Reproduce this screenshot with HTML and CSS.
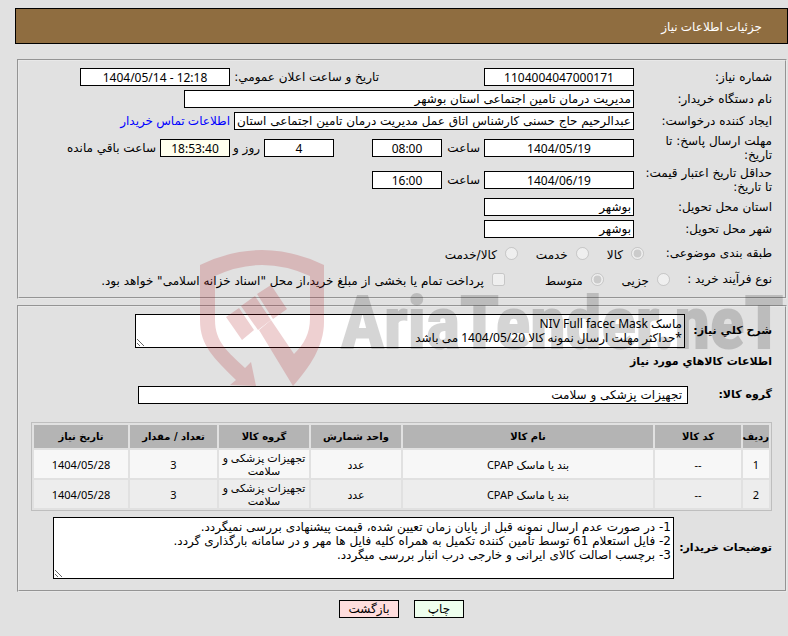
FILE: index.html
```html
<!DOCTYPE html>
<html lang="fa" dir="rtl">

<head>
    <meta charset="utf-8">
    <title>جزئیات اطلاعات نیاز</title>
    <link rel="stylesheet" href="styles.css">
</head>

<body>
    <h1 class="title">جزئیات اطلاعات نیاز</h1>

    <div id="page">
        <fieldset class="box info">
            <div class="row">
                <label class="name" for="number">شماره نیاز:</label>
                <input class="w150 center" type="text" id="number" value="1104004047000171" readonly>
                <label class="name second" for="announce">تاریخ و ساعت اعلان عمومي:</label>
                <input class="w150 center" type="text" id="announce" dir="ltr" value="1404/05/14 - 12:18" readonly>
            </div>
            <div class="row">
                <label class="name" for="buyer">نام دستگاه خریدار:</label>
                <input class="w450" type="text" id="buyer" value="مدیریت درمان تامین اجتماعی استان بوشهر" readonly>
            </div>
            <div class="row">
                <label class="name" for="creator">ایجاد کننده درخواست:</label>
                <input class="w400" type="text" id="creator" value="عبدالرحیم حاج حسنی کارشناس اتاق عمل مدیریت درمان تامین اجتماعی استان بوشهر" readonly>
                <a class="contact" href="#">اطلاعات تماس خریدار</a>
            </div>
            <div class="row tall">
                <label class="name" for="reply-date">مهلت ارسال پاسخ: تا<br>تاریخ:</label>
                <input class="w150 center" type="text" id="reply-date" value="1404/05/19" readonly>
                <label class="hour" for="reply-hour">ساعت</label>
                <input class="w70 center" type="text" id="reply-hour" value="08:00" readonly>
                <input class="w70 center days" type="text" id="days" value="4" readonly>
                <label class="and" for="days">روز و</label>
                <input class="w70 center timer" type="text" id="timer" value="18:53:40" readonly>
                <label class="left" for="timer">ساعت باقي مانده</label>
            </div>
            <div class="row tall">
                <label class="name" for="price-date">حداقل تاریخ اعتبار قیمت:<br>تا تاریخ:</label>
                <input class="w150 center" type="text" id="price-date" value="1404/06/19" readonly>
                <label class="hour" for="price-hour">ساعت</label>
                <input class="w70 center" type="text" id="price-hour" value="16:00" readonly>
            </div>
            <div class="row">
                <label class="name" for="province">استان محل تحویل:</label>
                <input class="w150" type="text" id="province" value="بوشهر" readonly>
            </div>
            <div class="row">
                <label class="name" for="city">شهر محل تحویل:</label>
                <input class="w150" type="text" id="city" value="بوشهر" readonly>
            </div>
            <div class="row options">
                <span class="caption">طبقه بندی موضوعی:</span>
                <input type="radio" name="kind" id="goods" checked disabled>
                <label for="goods">کالا</label>
                <input type="radio" name="kind" id="service" disabled>
                <label for="service">خدمت</label>
                <input type="radio" name="kind" id="both" disabled>
                <label for="both">کالا/خدمت</label>
            </div>
            <div class="row options">
                <span class="caption short">نوع فرآیند خرید :</span>
                <input type="radio" name="process" id="small" disabled>
                <label for="small">جزیی</label>
                <input type="radio" name="process" id="medium" checked disabled>
                <label class="wide" for="medium">متوسط</label>
                <input type="checkbox" id="treasury" disabled>
                <label for="treasury">پرداخت تمام یا بخشی از مبلغ خرید،از محل "اسناد خزانه اسلامی" خواهد بود.</label>
            </div>
        </fieldset>

        <fieldset class="box goods">
            <div class="line">
                <label class="bold summary-name" for="summary">شرح کلي نیاز:</label>
                <textarea class="summary" id="summary" readonly>ماسک NIV Full facec Mask
*حداکثر مهلت ارسال نمونه کالا 1404/05/20 می باشد</textarea>
            </div>
            <h2 class="bold">اطلاعات کالاهاي مورد نیاز</h2>
            <div class="line">
                <label class="bold group-name" for="group">گروه کالا:</label>
                <input class="group" type="text" id="group" value="تجهیزات پزشکی و سلامت" readonly>
            </div>
            <table>
                <colgroup>
                    <col class="c-row">
                    <col class="c-code">
                    <col class="c-name">
                    <col class="c-unit">
                    <col class="c-group">
                    <col class="c-count">
                    <col class="c-date">
                </colgroup>
                <thead>
                    <tr>
                        <th>ردیف</th>
                        <th>کد کالا</th>
                        <th>نام کالا</th>
                        <th>واحد شمارش</th>
                        <th>گروه کالا</th>
                        <th>تعداد / مقدار</th>
                        <th>تاریخ نیاز</th>
                    </tr>
                </thead>
                <tbody>
                    <tr>
                        <td>1</td>
                        <td>--</td>
                        <td>بند یا ماسک CPAP</td>
                        <td>عدد</td>
                        <td>تجهیزات پزشکی و سلامت</td>
                        <td>3</td>
                        <td>1404/05/28</td>
                    </tr>
                    <tr>
                        <td>2</td>
                        <td>--</td>
                        <td>بند یا ماسک CPAP</td>
                        <td>عدد</td>
                        <td>تجهیزات پزشکی و سلامت</td>
                        <td>3</td>
                        <td>1404/05/28</td>
                    </tr>
                </tbody>
            </table>
            <div class="line">
                <label class="bold notes-name" for="notes">توضیحات خریدار:</label>
                <textarea class="notes" id="notes" readonly>1- در صورت عدم ارسال نمونه قبل از پایان زمان تعیین شده، قیمت پیشنهادی بررسی نمیگردد.
2- فایل استعلام 61 توسط تأمین کننده تکمیل به همراه کلیه فایل ها مهر و در سامانه بارگذاری گردد.
3- برچسب اصالت کالای ایرانی و خارجی درب انبار بررسی میگردد.</textarea>
            </div>
        </fieldset>

        <div class="buttons">
            <button type="button" class="print">چاپ</button>
            <button type="button" class="back">بازگشت</button>
        </div>

        <div class="watermark" dir="ltr" aria-hidden="true">
            <svg class="shield" width="126" height="138" viewBox="0 0 126 138">
                <path d="M0 15Q62 -15 124 15V72C124 96 110 117 93 136L59 80L71 70L94 104C104 94 110 84 110 68V26Q62 4 15 26V70C15 92 28 102 45 118L51 112L56 136L30 135L36 130C14 108 0 96 0 70Z" />
                <path d="M26 67L39 58L54 80L42 90ZM41 56L55 46L71 70L58 80ZM57 44L71 35L87 59L73 69Z" />
            </svg>
            <span class="brand">AriaTender.neT</span>
        </div>
    </div>
</body>

</html>
```

FILE: styles.css
```css
body {
    margin: 8px 0 0 15px;
    background-color: #e1e1e1;
    color: #000;
    font-family: "DejaVu Sans", sans-serif;
    font-size: 12px;
    line-height: 14px;
}
.title {
    margin: 0 0 15px;
    padding: 11px 25px 9px;
    border: 1px solid #000;
    background-color: #8f6d40;
    color: #fff;
    font-family: "Noto Sans", "DejaVu Sans", sans-serif;
    font-size: 12px;
    font-weight: normal;
    line-height: 14px;
}
#page {
    position: relative;
}
.box {
    min-width: 0;
    margin: 0 1px 6px 2px;
    border: 2px groove #e8e8e8;
}
.info {
    padding: 5px 13px 5px 12px;
}
.row {
    display: flex;
    align-items: center;
    height: 22px;
    white-space: nowrap;
}
.tall {
    height: 32px;
}
.name {
    width: 138px;
}
.second {
    width: 145px;
    margin-right: 105px;
    margin-left: 4px;
}
input,
textarea,
button {
    box-sizing: border-box;
    font-family: inherit;
    font-size: 12px;
}
input[type="text"] {
    height: 18px;
    padding: 1px 2px;
    border: 1px solid #000;
    background-color: #fff;
    flex-shrink: 0;
}
.w70 {
    width: 70px;
}
.w150 {
    width: 150px;
}
.w400 {
    width: 400px;
}
.w450 {
    width: 450px;
}
.center {
    font-family: "Noto Sans", "DejaVu Sans", sans-serif;
    text-align: center;
}
.contact {
    margin-right: 4px;
    color: #0000ff;
    font-family: "Noto Sans", "DejaVu Sans", sans-serif;
    text-decoration: none;
}
.hour {
    width: 38px;
    margin-right: 4px;
}
.days {
    margin-right: 38px;
}
.and {
    width: 30px;
    margin-right: 4px;
}
.left {
    margin-right: 4px;
}
.row .timer {
    background-color: #ffffee;
}
.options {
    height: 26px;
}
.options input {
    margin: 0 0 0 8px;
}
.options label {
    padding-top: 3px;
    margin-left: 18px;
}
.options .wide {
    margin-left: 40px;
}
.caption {
    width: 128px;
}
.short {
    width: 102px;
}
.goods {
    padding: 7px 13px 11px 12px;
}
.line {
    display: flex;
    align-items: center;
    gap: 4px;
}
.bold {
    margin: 0;
    font-size: 11px;
    font-weight: bold;
    white-space: nowrap;
}
h2.bold {
    padding: 7px 0 17px;
}
.summary-name {
    width: 83px;
}
.group-name {
    width: 80px;
}
.notes-name {
    width: 94px;
}
textarea {
    display: block;
    padding: 2px;
    border: 1px solid #000;
    line-height: 14px;
    overflow: hidden;
}
.summary {
    width: 550px;
    height: 34px;
    font-family: "Noto Sans", "DejaVu Sans", sans-serif;
}
.notes {
    width: 621px;
    height: 62px;
}
input.group {
    width: 550px;
    padding: 1px 5px;
}
table {
    width: 100%;
    margin: 18px 0 6px;
    border: 1px solid #bebebe;
    border-spacing: 2px;
    table-layout: fixed;
    text-align: center;
    font-family: "Noto Sans", "DejaVu Sans", sans-serif;
    font-size: 11px;
    line-height: 13px;
}
.c-row {
    width: 26px;
}
.c-code {
    width: 86px;
}
.c-unit {
    width: 90px;
}
.c-group {
    width: 90px;
}
.c-count {
    width: 87px;
}
.c-date {
    width: 94px;
}
th {
    height: 23px;
    padding: 0;
    background-color: #b4b4b4;
    font-family: "DejaVu Sans", sans-serif;
    font-size: 10px;
    white-space: nowrap;
}
td {
    height: 28px;
    padding: 0;
    background-color: #f7f7f7;
}
tr:nth-child(2) td {
    background-color: #ededed;
}
.buttons {
    display: flex;
    justify-content: center;
    gap: 15px;
    padding-top: 2px;
}
button {
    height: 18px;
    padding: 0;
    border: 1px solid #000;
    color: #000;
}
.print {
    width: 50px;
    background-color: #eeffee;
}
.back {
    width: 60px;
    background-color: #ffdddd;
}
/* site mark lies over the form */
.watermark {
    position: absolute;
    top: 191px;
    left: 185px;
    right: 0;
    display: flex;
    gap: 15px;
    overflow: hidden;
    pointer-events: none;
}
.shield {
    flex: none;
    fill: #b01820;
    opacity: 0.2;
}
.brand {
    padding-top: 32px;
    color: #000;
    font-family: "Liberation Sans Narrow", "Roboto Condensed", "Liberation Sans", sans-serif;
    font-size: 72px;
    font-weight: bold;
    line-height: 84px;
    opacity: 0.16;
    -webkit-text-stroke: 2px #000;
}
```
